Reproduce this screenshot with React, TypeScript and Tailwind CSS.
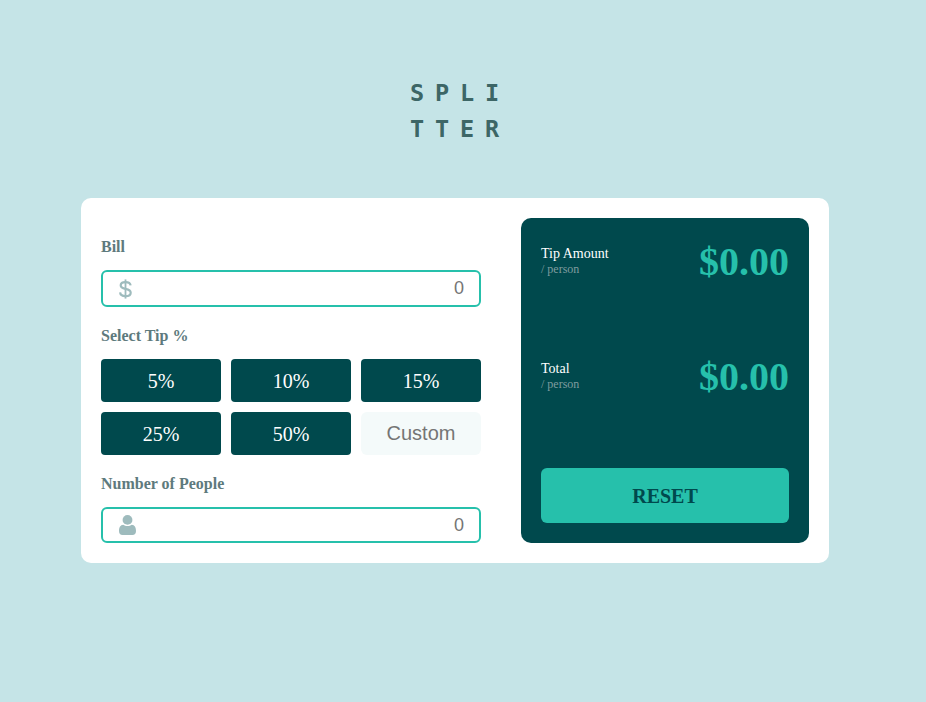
import { useState } from "react";

const fieldInput =
  "h-full w-full min-w-0 bg-transparent pr-[15px] text-right font-['Liberation_Sans',Arial,sans-serif] text-[18px] text-black outline-none placeholder:text-[#757575]";

function DollarIcon() {
  return (
    <svg className="shrink-0" width="13" height="20" viewBox="0 0 13 20" fill="none" stroke="#9EBBBD" strokeWidth="2.2">
      <path d="M11.6 6.400C11.300 4.100 9.400 3.100 6.500 3.100S1.700 4.300 1.700 6.300c0 2.500 2.200 3.100 4.800 3.600 2.900.6 5.200 1.300 5.200 3.800 0 2.200-2.100 3.400-5.200 3.400-3.200 0-5.200-1.400-5.400-3.800" />
      <path d="M6.500 0.400v19.200" strokeWidth="1.800" />
    </svg>
  );
}

function PersonIcon() {
  return (
    <svg className="shrink-0" width="17" height="20" viewBox="0 0 17 20" fill="#9EBBBD">
      <circle cx="8.500" cy="4.900" r="4.900" />
      <path d="M4.200 9.700c1.200.9 2.600 1.400 4.300 1.400s3.100-.5 4.300-1.400c2.800.2 4.200 2.700 4.200 6.300 0 2.800-1.300 4-3.500 4h-10C1.300 20 0 18.800 0 16c0-3.600 1.400-6.100 4.200-6.300z" />
    </svg>
  );
}

function Amount({ title, value }: { title: string; value: string }) {
  return (
    <div className="flex h-[46px] items-center justify-between">
      <div>
        <div className="text-[14px] leading-4 text-white">{title}</div>
        <div className="text-[12px] leading-[15px] text-[#7F9C9F]">/ person</div>
      </div>
      <div className="pt-0.5 text-[40px] leading-[46px] font-bold text-[#26C0AB]">{value}</div>
    </div>
  );
}

export default function App() {
  const [bill, setBill] = useState("");
  const [people, setPeople] = useState("");
  const [custom, setCustom] = useState("");
  const [tip, setTip] = useState(0);

  const rate = Number(custom) || tip;
  const count = Number(people);
  const tipEach = count > 0 ? (Number(bill) * rate) / 100 / count : 0;
  const totalEach = count > 0 ? Number(bill) / count + tipEach : 0;

  const reset = () => {
    setBill("");
    setPeople("");
    setCustom("");
    setTip(0);
  };

  return (
    <div className="flex min-h-screen flex-col items-center bg-[#C5E4E7] pt-[75px] pr-4 font-['Liberation_Serif','Times_New_Roman',serif]">
      <h1 className="w-[90px] font-['DejaVu_Sans_Mono',monospace] text-[23.5px] leading-9 font-bold tracking-[10.85px] whitespace-nowrap text-[#3D6666]">
        SPLI
        <br />
        TTER
      </h1>
      <main className="mt-[51px] flex h-[365px] w-[748px] gap-10 rounded-[10px] bg-white p-5">
        <section className="w-[380px] pt-5 text-[16px] leading-[18px] font-bold text-[#5E7A7D]">
          <label htmlFor="bill" className="block">Bill</label>
          <div className="mt-[14px] flex h-[37px] items-center rounded-[6px] border-2 border-[#26C0AB] pl-4 font-normal">
            <DollarIcon />
            <input id="bill" placeholder="0" value={bill} onChange={(e) => setBill(e.target.value)} className={fieldInput} />
          </div>
          <h2 className="mt-5">Select Tip %</h2>
          <div className="mt-[14px] grid grid-cols-3 gap-[10px] font-normal">
            {[5, 10, 15, 25, 50].map((n) => (
              <button key={n} onClick={() => setTip(n)} className="h-[43px] rounded-[4px] bg-[#00494D] text-[20px] text-white">
                {n}%
              </button>
            ))}
            <input
              placeholder="Custom"
              value={custom}
              onChange={(e) => setCustom(e.target.value)}
              className="h-[43px] w-full rounded-[6px] bg-[#F4FAFA] text-center font-['Liberation_Sans',Arial,sans-serif] text-[20px] text-black outline-none placeholder:text-[#757575]"
            />
          </div>
          <label htmlFor="people" className="mt-5 block">Number of People</label>
          <div className="mt-[14px] flex h-9 items-center rounded-[6px] border-2 border-[#26C0AB] pl-4 font-normal">
            <PersonIcon />
            <input id="people" placeholder="0" value={people} onChange={(e) => setPeople(e.target.value)} className={fieldInput} />
          </div>
        </section>
        <section className="flex w-[288px] flex-col rounded-[10px] bg-[#00494D] p-5">
          <Amount title="Tip Amount" value={`$${tipEach.toFixed(2)}`} />
          <div className="mt-[69px]">
            <Amount title="Total" value={`$${totalEach.toFixed(2)}`} />
          </div>
          <button onClick={reset} className="mt-auto h-[55px] rounded-[6px] bg-[#26C0AB] text-[20px] font-bold text-[#00494D]">
            RESET
          </button>
        </section>
      </main>
    </div>
  );
}
